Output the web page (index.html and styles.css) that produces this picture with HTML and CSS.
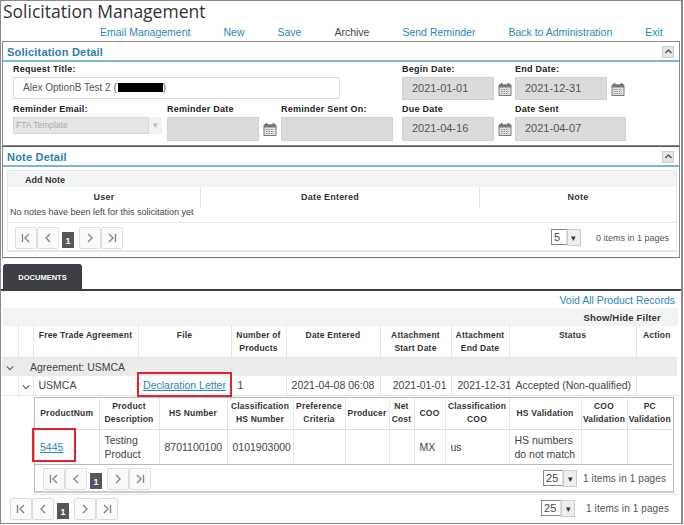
FILE: index.html
```html
<!DOCTYPE html>
<html lang="en">
<head>
    <meta charset="UTF-8">
    <title>Solicitation Management</title>
    <link rel="stylesheet" href="styles.css">
</head>
<body>
    <svg class="defs" width="0" height="0">
        <symbol id="cal" viewBox="0 0 14 14">
            <path d="M1 3h12v10.500H1z" fill="#e4e4e4" stroke="#777"/>
            <path d="M1 2.500h12v3H1z" fill="#777"/>
            <path d="M3.500 1v2M10.500 1v2" stroke="#666" stroke-width="1.500"/>
            <path d="M3 7.500h8M3 9.500h8M3 11.500h8" stroke="#888" stroke-dasharray="1.500 1"/>
        </symbol>
        <symbol id="first" viewBox="0 0 12 12"><path d="M2.500 2v8M9 2 5 6l4 4" fill="none" stroke="#888" stroke-width="1.400"/></symbol>
        <symbol id="prev" viewBox="0 0 12 12"><path d="M8 2 4 6l4 4" fill="none" stroke="#888" stroke-width="1.400"/></symbol>
        <symbol id="next" viewBox="0 0 12 12"><path d="m4 2 4 4-4 4" fill="none" stroke="#888" stroke-width="1.400"/></symbol>
        <symbol id="last" viewBox="0 0 12 12"><path d="M9.500 2v8M3 2l4 4-4 4" fill="none" stroke="#888" stroke-width="1.400"/></symbol>
        <symbol id="down" viewBox="0 0 12 12"><path d="m2 4 4 4 4-4" fill="none" stroke="#666" stroke-width="1.500"/></symbol>
    </svg>

    <div class="page">
        <h1>Solicitation Management</h1>
        <nav class="topnav">
            <a>Email Management</a>
            <a>New</a>
            <a>Save</a>
            <span>Archive</span>
            <a>Send Reminder</a>
            <a>Back to Administration</a>
            <a>Exit</a>
        </nav>

        <section class="panel detail-panel">
            <div class="panel-head">
                <h2>Solicitation Detail</h2>
                <span class="collapse"><svg width="9" height="9" viewBox="0 0 12 12"><path d="m2 8 4-4 4 4" fill="none" stroke="#555" stroke-width="2"/></svg></span>
            </div>
            <div class="form-grid">
                <div class="field f-title">
                    <label>Request Title:</label>
                    <div class="input title-input">Alex OptionB Test 2 (<span class="redact"></span>)</div>
                </div>
                <div class="field f-begin">
                    <label>Begin Date:</label>
                    <div class="date-row"><div class="input grey">2021-01-01</div><svg class="cal"><use href="#cal"/></svg></div>
                </div>
                <div class="field f-end">
                    <label>End Date:</label>
                    <div class="date-row"><div class="input grey">2021-12-31</div><svg class="cal"><use href="#cal"/></svg></div>
                </div>
                <div class="field f-email">
                    <label>Reminder Email:</label>
                    <div class="select-off"><span class="select-text">FTA Template</span><span class="select-arrow">▾</span></div>
                </div>
                <div class="field f-rdate">
                    <label>Reminder Date</label>
                    <div class="date-row"><div class="input grey"></div><svg class="cal"><use href="#cal"/></svg></div>
                </div>
                <div class="field f-rsent">
                    <label>Reminder Sent On:</label>
                    <div class="input grey"></div>
                </div>
                <div class="field f-due">
                    <label>Due Date</label>
                    <div class="date-row"><div class="input grey">2021-04-16</div><svg class="cal"><use href="#cal"/></svg></div>
                </div>
                <div class="field f-sent">
                    <label>Date Sent</label>
                    <div class="input grey">2021-04-07</div>
                </div>
            </div>
        </section>

        <section class="panel note-panel">
            <div class="panel-head">
                <h2>Note Detail</h2>
                <span class="collapse"><svg width="9" height="9" viewBox="0 0 12 12"><path d="m2 8 4-4 4 4" fill="none" stroke="#555" stroke-width="2"/></svg></span>
            </div>
            <div class="note-grid">
                <div class="toolbar"><b>Add Note</b></div>
                <div class="note-cols">
                    <div>User</div>
                    <div class="note-date">Date Entered</div>
                    <div>Note</div>
                </div>
                <div class="note-empty">No notes have been left for this solicitation yet</div>
                <div class="pager note-pager">
                    <span class="pg-btn"><svg><use href="#first"/></svg></span><span class="pg-btn"><svg><use href="#prev"/></svg></span><span class="pg-num">1</span><span class="pg-btn"><svg><use href="#next"/></svg></span><span class="pg-btn"><svg><use href="#last"/></svg></span>
                    <span class="pg-size"><span class="pg-val">5</span><span class="pg-arrow">▾</span></span>
                    <span class="pg-info">0 items in 1 pages</span>
                </div>
            </div>
        </section>

        <div class="tabs"><span class="tab">DOCUMENTS</span></div>

        <div class="void-row"><a>Void All Product Records</a></div>

        <div class="toolbar doc-toolbar"><b>Show/Hide Filter</b></div>

        <table class="doc-table">
            <colgroup>
                <col class="c16"><col class="c15"><col class="c105"><col class="c93"><col class="c55"><col class="c94"><col class="c71"><col class="c58"><col class="c127"><col class="c41">
            </colgroup>
            <tr class="head">
                <th></th><th></th>
                <th class="one-line">Free Trade Agreement</th>
                <th>File</th>
                <th>Number of Products</th>
                <th>Date Entered</th>
                <th>Attachment Start Date</th>
                <th>Attachment End Date</th>
                <th>Status</th>
                <th>Action</th>
            </tr>
            <tr class="group">
                <td class="arrow-cell"><svg class="exp"><use href="#down"/></svg></td>
                <td colspan="9" class="group-name">Agreement: USMCA</td>
            </tr>
            <tr class="row">
                <td></td>
                <td class="arrow-cell"><svg class="exp"><use href="#down"/></svg></td>
                <td class="pad-small">USMCA</td>
                <td class="mark-cell"><a class="link">Declaration Letter</a><span class="redbox file-box"></span></td>
                <td class="pad">1</td>
                <td class="center">2021-04-08 06:08</td>
                <td class="right">2021-01-01</td>
                <td class="pad">2021-12-31</td>
                <td class="pad">Accepted (Non-qualified)</td>
                <td></td>
            </tr>
            <tr>
                <td colspan="2" class="plain"></td>
                <td colspan="8" class="nested">
                    <div class="inner">
                        <table class="prod-table">
                            <colgroup>
                                <col class="p64"><col class="p60"><col class="p68"><col class="p66"><col class="p52"><col class="p44"><col class="p25"><col class="p31"><col class="p64"><col class="p72"><col class="p46"><col class="p45">
                            </colgroup>
                            <tr class="head">
                                <th>ProductNum</th>
                                <th>Product Description</th>
                                <th>HS Number</th>
                                <th>Classification HS Number</th>
                                <th>Preference Criteria</th>
                                <th>Producer</th>
                                <th>Net Cost</th>
                                <th>COO</th>
                                <th>Classification COO</th>
                                <th>HS Validation</th>
                                <th>COO Validation</th>
                                <th>PC Validation</th>
                            </tr>
                            <tr class="prod-row">
                                <td class="mark-cell"><a class="link">5445</a><span class="redbox num-box"></span></td>
                                <td>Testing Product</td>
                                <td>8701100100</td>
                                <td>0101903000</td>
                                <td></td><td></td><td></td>
                                <td>MX</td>
                                <td>us</td>
                                <td>HS numbers do not match</td>
                                <td></td><td></td>
                            </tr>
                        </table>
                        <div class="pager inner-pager">
                            <span class="pg-btn"><svg><use href="#first"/></svg></span><span class="pg-btn"><svg><use href="#prev"/></svg></span><span class="pg-num">1</span><span class="pg-btn"><svg><use href="#next"/></svg></span><span class="pg-btn"><svg><use href="#last"/></svg></span>
                            <span class="pg-size wide"><span class="pg-val">25</span><span class="pg-arrow">▾</span></span>
                            <span class="pg-info">1 items in 1 pages</span>
                        </div>
                    </div>
                </td>
            </tr>
        </table>

        <div class="pager doc-pager">
            <span class="pg-btn"><svg><use href="#first"/></svg></span><span class="pg-btn"><svg><use href="#prev"/></svg></span><span class="pg-num">1</span><span class="pg-btn"><svg><use href="#next"/></svg></span><span class="pg-btn"><svg><use href="#last"/></svg></span>
            <span class="pg-size wide"><span class="pg-val">25</span><span class="pg-arrow">▾</span></span>
            <span class="pg-info">1 items in 1 pages</span>
        </div>
    </div>
</body>
</html>
```

FILE: styles.css
```css
html, body {
    margin: 0;
    padding: 0;
    background-color: #fff;
}
body {
    font-family: 'Liberation Sans', Arial, sans-serif;
    font-size: 10.500px;
    color: #444;
}
.defs {
    position: absolute;
}
.page {
    box-sizing: border-box;
    width: 683px;
    height: 524px;
    border: 1px solid #8a8a8a;
    border-right-width: 2px;
}
h1 {
    margin: 0;
    height: 21px;
    padding-left: 2px;
    font-family: 'Open Sans', sans-serif;
    font-weight: 400;
    font-size: 17.500px;
    line-height: 21px;
    color: #333;
}
.topnav {
    display: flex;
    height: 18px;
    padding: 1px 0 0 99px;
    align-items: center;
    gap: 33px;
    font-size: 10.500px;
    white-space: nowrap;
    color: #444;
}
.topnav a {
    color: #2a87b5;
}
.panel {
    border: 1px solid #8a8a8a;
    margin: 0 0 0 1px;
    width: 678px;
    box-sizing: border-box;
}
.detail-panel {
    height: 105px;
}
.note-panel {
    height: 112px;
    border-top-color: #555;
    border-bottom-color: #777;
}
.panel-head {
    display: flex;
    justify-content: space-between;
    align-items: center;
    box-sizing: content-box;
    height: 17px;
    padding: 1px 5px 0 4px;
    border-bottom: 2px solid #7db6d0;
}
.panel-head h2 {
    margin: 0;
    font-size: 11px;
    letter-spacing: .2px;
    color: #2a7fae;
}
.collapse {
    display: flex;
    align-items: center;
    justify-content: center;
    width: 10px;
    height: 10px;
    border: 1px solid #ccc;
    background-color: #e6e6e6;
}
.form-grid {
    display: grid;
    grid-template-columns: 154px 114px 121px 113px auto;
    grid-template-rows: 40px 40px;
    padding: 0 0 0 10px;
}
.field label {
    display: block;
    height: 15px;
    font-size: 9px;
    font-weight: bold;
    letter-spacing: .25px;
    line-height: 14px;
    color: #222;
}
.f-title {
    grid-column: 1 / span 3;
}
.input {
    box-sizing: border-box;
    height: 23px;
    line-height: 20px;
    padding-left: 9px;
    font-size: 11px;
    color: #555;
}
.title-input {
    width: 327px;
    height: 22px;
    border: 1px solid #ddd;
    padding-left: 9px;
    font-size: 10px;
    border-radius: 2px;
}
.redact {
    display: inline-block;
    width: 45px;
    height: 9px;
    margin-left: 1px;
    background-color: #000;
    vertical-align: -1px;
}
.grey {
    background-color: #dbdbdb;
    border: 1px solid #d2d2d2;
}
.date-row {
    display: flex;
    align-items: center;
    gap: 4px;
}
.f-begin .input, .f-end .input, .f-due .input, .f-rdate .input {
    width: 92px;
}
.f-rdate .input {
    height: 24px;
}
.f-rsent .input {
    width: 112px;
    height: 24px;
}
.f-sent .input {
    width: 111px;
    padding-left: 9px;
    height: 24px;
}
.f-due .input {
    height: 24px;
}
.cal {
    width: 14px;
    height: 14px;
}
.select-off {
    display: flex;
    width: 149px;
    height: 17px;
    margin-top: 0;
    font-size: 8.500px;
    color: #aaa;
}
.select-text {
    flex: 1;
    background-color: #e6e6e6;
    border: 1px solid #d8d8d8;
    line-height: 15px;
    padding-left: 2px;
}
.select-arrow {
    width: 13px;
    text-align: center;
    line-height: 16px;
    background-color: #f2f2f2;
    color: #bbb;
}
.note-grid {
    margin: 3px 2px 0 4px;
    border: 1px solid #e6e6e6;
    height: 80px;
}
.toolbar {
    display: flex;
    align-items: center;
    height: 16px;
    padding-top: 1px;
    box-sizing: border-box;
    background-color: #f2f3f4;
    font-size: 9px;
    color: #333;
}
.note-grid .toolbar {
    padding-left: 17px;
}
.note-cols {
    display: grid;
    grid-template-columns: 192px 279px 1fr;
    height: 19px;
    align-items: stretch;
    font-size: 9px;
    font-weight: bold;
    letter-spacing: .2px;
    color: #333;
    text-align: center;
    line-height: 21px;
}
.note-cols div + div {
    border-left: 1px solid #e6e6e6;
}
.note-cols .note-date {
    padding-right: 20px;
}
.note-empty {
    height: 16px;
    padding-left: 2px;
    font-size: 9px;
    line-height: 13px;
    border-bottom: 1px solid #e6e6e6;
}
.pager {
    display: flex;
    align-items: center;
    font-size: 9px;
    color: #555;
}
.note-pager {
    box-sizing: border-box;
    height: 28px;
    padding: 2px 7px 0 7px;
    border-bottom: 1px solid #e6e6e6;
}
.pg-btn {
    display: flex;
    align-items: center;
    justify-content: center;
    box-sizing: border-box;
    width: 22px;
    height: 22px;
    border: 1px solid #ddd;
    border-radius: 2px;
    background-color: #fafafa;
}
.pg-btn svg {
    width: 12px;
    height: 12px;
}
.pg-num {
    width: 12px;
    height: 16px;
    margin: 4px 5px 0 3px;
    background-color: #54565c;
    color: #fff;
    font-size: 9px;
    font-weight: bold;
    text-align: center;
    line-height: 18px;
}
.pg-size {
    display: flex;
    margin-left: auto;
    font-size: 11px;
    color: #444;
}
.pg-val {
    box-sizing: border-box;
    width: 16px;
    height: 16px;
    line-height: 14px;
    padding-left: 2px;
    border: 1px solid #888;
    border-right-color: #ddd;
    background-color: #fff;
}
.wide .pg-val {
    width: 20px;
}
.pg-arrow {
    box-sizing: border-box;
    width: 14px;
    height: 17px;
    font-size: 9px;
    line-height: 16px;
    text-align: center;
    color: #333;
    background-color: #eee;
    border: 1px solid #ccc;
}
.pg-info {
    margin-left: 15px;
    font-size: 9px;
}
.inner-pager .pg-info, .doc-pager .pg-info {
    font-size: 10px;
    letter-spacing: .1px;
}
.inner-pager .pg-info {
    margin-left: 6px;
}
.doc-pager .pg-info {
    margin-left: 11px;
}
.tabs {
    margin-top: 6px;
    height: 27px;
    padding-left: 2px;
    border-bottom: 2px solid #3d3e43;
    box-sizing: border-box;
}
.tab {
    display: block;
    width: 79px;
    height: 25px;
    background-color: #3d3e43;
    border-radius: 3px 3px 0 0;
    color: #fff;
    font-size: 7.500px;
    font-weight: bold;
    text-align: center;
    line-height: 27px;
}
.void-row {
    height: 17px;
    padding-right: 6px;
    text-align: right;
    line-height: 19px;
    font-size: 10.500px;
}
.void-row a {
    color: #2a87b5;
}
.doc-toolbar {
    justify-content: flex-end;
    height: 18px;
    margin: 0 3px 0 2px;
    padding-right: 17px;
    font-size: 9.500px;
    letter-spacing: .2px;
}
table {
    border-collapse: collapse;
    table-layout: fixed;
}
.doc-table {
    width: 675px;
    margin-left: 1px;
}
.c16 { width: 16px; }
.c15 { width: 15px; }
.c105 { width: 105px; }
.c93 { width: 93px; }
.c55 { width: 55px; }
.c94 { width: 94px; }
.c71 { width: 71px; }
.c58 { width: 58px; }
.c127 { width: 127px; }
.c41 { width: 41px; }
.p64 { width: 64px; }
.p60 { width: 60px; }
.p68 { width: 68px; }
.p66 { width: 66px; }
.p52 { width: 52px; }
.p44 { width: 44px; }
.p25 { width: 25px; }
.p31 { width: 31px; }
.p72 { width: 72px; }
.p46 { width: 46px; }
.p45 { width: 45px; }
th {
    padding: 0 1px;
    font-size: 8.500px;
    letter-spacing: .2px;
    line-height: 13px;
    color: #333;
    border-left: 1px solid #e6e6e6;
}
.one-line {
    white-space: nowrap;
}
.doc-table > tbody > .head > th {
    height: 31px;
    vertical-align: top;
    padding-top: 3px;
    box-sizing: border-box;
}
.doc-table > tbody > .head > th:first-child {
    border-left: 0;
}
.group td {
    height: 18px;
    padding: 0;
    background-color: #ebebeb;
    font-size: 10.500px;
    border-top: 1px solid #e3e3e3;
}
.group .group-name {
    padding-left: 12px;
}
.row td {
    height: 19px;
    padding: 0;
    font-size: 10.500px;
    border-left: 1px solid #e6e6e6;
    border-bottom: 1px solid #e6e6e6;
    white-space: nowrap;
}
.row td:first-child {
    border-left: 0;
}
.arrow-cell {
    text-align: center;
}
.exp {
    display: block;
    width: 10px;
    height: 10px;
    margin: 3px auto 0;
}
.row .pad {
    padding-left: 6px;
}
.row .pad-small {
    padding-left: 5px;
}
.center {
    text-align: center;
}
.row .right {
    text-align: right;
    padding-right: 4px;
}
.mark-cell {
    position: relative;
    text-align: center;
}
.link {
    color: #2a87b5;
    text-decoration: underline;
}
.redbox {
    position: absolute;
    border: 2px solid #e8202c;
    pointer-events: none;
}
.file-box {
    left: -2px;
    top: -4px;
    right: -1px;
    bottom: -2px;
}
.num-box {
    left: -3px;
    top: -2px;
    width: 40px;
    height: 30px;
}
.plain, .nested {
    padding: 0;
}
.nested {
    height: 97px;
    padding-top: 1px;
    vertical-align: top;
    border-bottom: 1px solid #e6e6e6;
}
.inner {
    box-sizing: border-box;
    width: 640px;
    margin-left: 1px;
    height: 96px;
    border: 1px solid #bcbcbc;
    border-bottom-width: 2px;
    border-bottom-color: #ccc;
}
.prod-table {
    width: 637px;
}
.prod-table th {
    height: 31px;
    padding: 0;
    border-bottom: 1px solid #e0e0e0;
}
.prod-table th:first-child {
    border-left: 0;
}
.prod-row td {
    height: 34px;
    padding: 0 0 0 5px;
    font-size: 10.500px;
    line-height: 14px;
    border-left: 1px solid #e6e6e6;
    border-bottom: 1px solid #bbb;
}
.prod-row td:first-child {
    border-left: 0;
    text-align: left;
    padding-left: 5px;
}
.inner-pager {
    height: 28px;
    padding: 0 7px 0 8px;
}
.doc-pager {
    height: 28px;
    padding: 0 12px 0 9px;
}
```
